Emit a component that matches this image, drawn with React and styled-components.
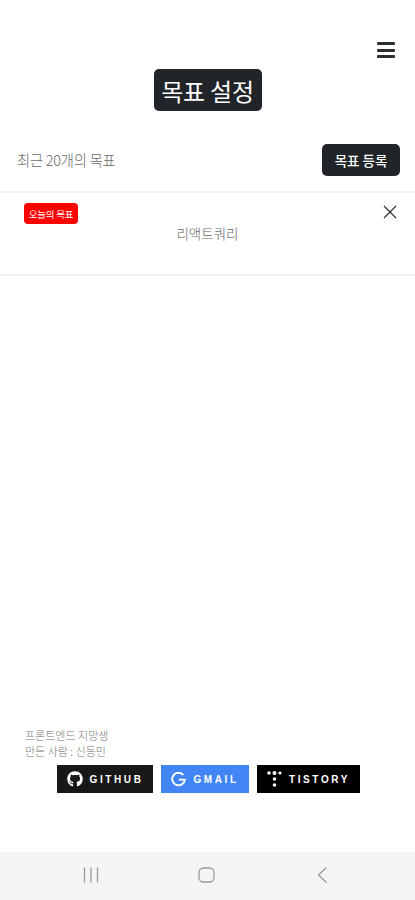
import React from 'react';
import styled, { createGlobalStyle } from 'styled-components';
import { FaGithub } from 'react-icons/fa';

const GlobalStyle = createGlobalStyle`
  html, body {
    margin: 0;
    padding: 0;
    background: #fff;
    font-family: "Noto Sans CJK KR", "Noto Sans", sans-serif;
  }
  * { box-sizing: border-box; }
`;

const Page = styled.div`
  width: 415px;
  height: 900px;
  display: flex;
  flex-direction: column;
  overflow: hidden;
  background: #fff;
`;

const Header = styled.header`
  display: flex;
  justify-content: flex-end;
  padding: 42px 20px 0 0;
  height: 69px;
`;

const MenuButton = styled.div`
  width: 18px;
  height: 16px;
  display: flex;
  flex-direction: column;
  justify-content: space-between;
  span {
    display: block;
    height: 3px;
    border-radius: 1px;
    background: #2b2f33;
  }
`;

const TitleRow = styled.div`
  display: flex;
  justify-content: center;
`;

const Title = styled.h1`
  margin: 0;
  width: 108px;
  height: 42px;
  display: flex;
  align-items: center;
  justify-content: center;
  border-radius: 5px;
  background: #212529;
  color: #fff;
  font-size: 24px;
  font-weight: 400;
  white-space: nowrap;
  letter-spacing: -0.2px;
`;

const Toolbar = styled.div`
  display: flex;
  align-items: center;
  justify-content: space-between;
  height: 82px;
  padding: 16px 15px 0 17px;
  border-bottom: 2px solid #f1f1f1;
`;

const Caption = styled.span`
  font-size: 14.3px;
  font-weight: 300;
  color: #6a6a6a;
  letter-spacing: -0.2px;
`;

const AddButton = styled.button`
  width: 78px;
  height: 32px;
  margin-top: 2px;
  border: 0;
  border-radius: 5px;
  background: #212529;
  color: #fff;
  font-family: inherit;
  font-size: 13.5px;
  font-weight: 500;
  white-space: nowrap;
  padding: 0;
`;

const GoalItem = styled.div`
  position: relative;
  height: 83px;
  padding: 10px 24px 0;
  border-bottom: 2px solid #f1f1f1;
`;

const TodayBadge = styled.span`
  display: flex;
  align-items: center;
  justify-content: center;
  width: 54px;
  height: 21px;
  border-radius: 4px;
  background: #ff0000;
  color: #fff;
  font-size: 9.5px;
  white-space: nowrap;
  letter-spacing: -0.2px;
`;

const GoalText = styled.div`
  margin-top: -1px;
  text-align: center;
  font-size: 13.5px;
  font-weight: 300;
  color: #666;
  line-height: 20px;
`;

const CloseIcon = styled.svg`
  position: absolute;
  top: 12px;
  right: 18px;
`;

const Spacer = styled.main`
  flex: 1;
`;

const Footer = styled.footer`
  height: 128px;
  padding: 3px 0 0 25px;
`;

const FooterLine = styled.div`
  font-size: 11px;
  font-weight: 300;
  line-height: 16px;
  color: #777;
`;

const Badges = styled.div`
  display: flex;
  gap: 8px;
  margin-top: 6px;
  margin-left: 32px;
`;

const Badge = styled.div`
  display: flex;
  align-items: center;
  justify-content: center;
  gap: 7px;
  height: 28px;
  width: ${(p) => p.$width}px;
  background: ${(p) => p.$bg};
  color: #fff;
  font-family: "Liberation Sans", sans-serif;
  font-size: 10px;
  font-weight: 700;
  letter-spacing: 2.6px;
`;

const NavBar = styled.nav`
  height: 48px;
  background: #f5f5f5;
  display: grid;
  grid-template-columns: repeat(3, 116px);
  justify-content: center;
  justify-items: center;
  align-items: center;
  padding: 0 2px 2px 0;
`;

const GoogleIcon = () => (
  <svg width="15" height="15" viewBox="0 0 15 15" fill="none" stroke="#fff" strokeWidth="1.9">
    <path d="M12.4 3A6.3 6.3 0 1 0 13.8 7.6H7.8" />
  </svg>
);

const TistoryIcon = () => (
  <svg width="15" height="17" viewBox="0 0 15 17" fill="#fff">
    <circle cx="2" cy="2" r="1.8" />
    <circle cx="7.5" cy="2" r="2" />
    <circle cx="13" cy="2" r="1.6" />
    <circle cx="7.5" cy="8" r="1.8" />
    <circle cx="7.5" cy="14" r="1.8" />
  </svg>
);

export default function App() {
  return (
    <Page>
      <GlobalStyle />
      <Header>
        <MenuButton>
          <span />
          <span />
          <span />
        </MenuButton>
      </Header>
      <TitleRow>
        <Title>목표 설정</Title>
      </TitleRow>
      <Toolbar>
        <Caption>최근 20개의 목표</Caption>
        <AddButton>목표 등록</AddButton>
      </Toolbar>
      <GoalItem>
        <TodayBadge>오늘의 목표</TodayBadge>
        <GoalText>리액트쿼리</GoalText>
        <CloseIcon width="14" height="14" viewBox="0 0 14 14" fill="none" stroke="#333" strokeWidth="1.3">
          <path d="M1 1l12 12M13 1L1 13" />
        </CloseIcon>
      </GoalItem>
      <Spacer />
      <Footer>
        <FooterLine>프론트엔드 지망생</FooterLine>
        <FooterLine>만든 사람 : 신동민</FooterLine>
        <Badges>
          <Badge $width={96} $bg="#181717">
            <FaGithub size={16} />
            GITHUB
          </Badge>
          <Badge $width={88} $bg="#4285f4">
            <GoogleIcon />
            GMAIL
          </Badge>
          <Badge $width={103} $bg="#000">
            <TistoryIcon />
            TISTORY
          </Badge>
        </Badges>
      </Footer>
      <NavBar>
        <svg width="16" height="16" viewBox="0 0 16 16" stroke="#9a9a9a" strokeWidth="1.3">
          <path d="M1.5 0.5v15M8 0.5v15M14.5 0.5v15" />
        </svg>
        <svg width="17" height="16" viewBox="0 0 17 16" fill="none" stroke="#9a9a9a" strokeWidth="1.3">
          <rect x="1" y="1" width="15" height="14" rx="4.5" />
        </svg>
        <svg width="11" height="16" viewBox="0 0 11 16" fill="none" stroke="#9a9a9a" strokeWidth="1.3">
          <path d="M9.5 0.5L1.5 8l8 7.5" />
        </svg>
      </NavBar>
    </Page>
  );
}
